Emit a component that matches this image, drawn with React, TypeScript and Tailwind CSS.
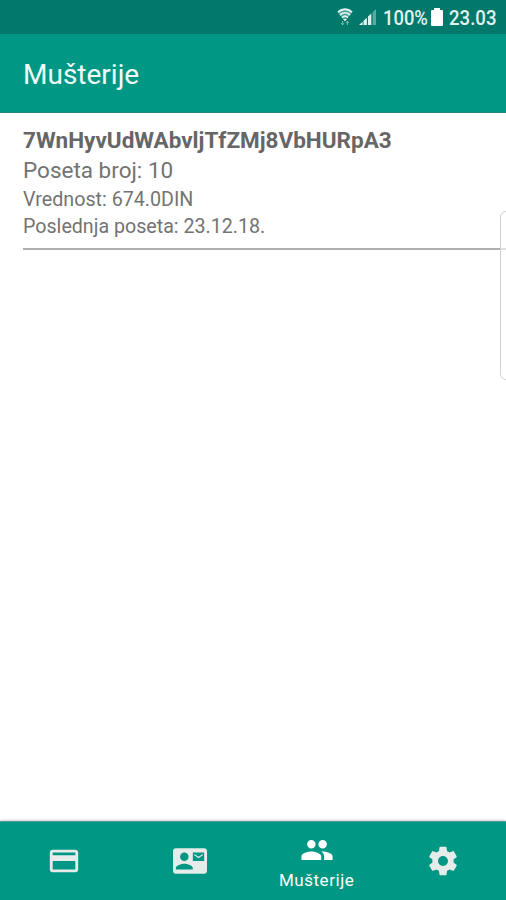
import type { ReactNode } from 'react';
import { MdContactMail, MdPayment, MdPeople } from 'react-icons/md';

interface Customer {
  id: string;
  visits: number;
  value: string;
  lastVisit: string;
}

interface Tab {
  key: string;
  label: string;
  icon: ReactNode;
}

const customers: Customer[] = [
  {
    id: '7WnHyvUdWAbvljTfZMj8VbHURpA3',
    visits: 10,
    value: '674.0DIN',
    lastVisit: '23.12.18.',
  },
];

function SettingsIcon() {
  return (
    <svg viewBox="0 0 24 24" className="size-[34px]" fill="currentColor">
      <path d="M19.43 12.98c.04-.32.07-.64.07-.98s-.03-.66-.07-.98l2.11-1.65c.19-.15.24-.42.12-.64l-2-3.46c-.12-.22-.39-.3-.61-.22l-2.49 1c-.52-.4-1.08-.73-1.69-.98l-.38-2.65C14.46 2.18 14.25 2 14 2h-4c-.25 0-.46.18-.49.42l-.38 2.65c-.61.25-1.17.59-1.69.98l-2.49-1c-.23-.09-.49 0-.61.22l-2 3.46c-.13.22-.07.49.12.64l2.11 1.65c-.04.32-.07.65-.07.98s.03.66.07.98l-2.11 1.65c-.19.15-.24.42-.12.64l2 3.46c.12.22.39.3.61.22l2.49-1c.52.4 1.08.73 1.69.98l.38 2.65c.03.24.24.42.49.42h4c.25 0 .46-.18.49-.42l.38-2.65c.61-.25 1.17-.59 1.69-.98l2.49 1c.23.09.49 0 .61-.22l2-3.46c.12-.22.07-.49-.12-.64l-2.11-1.65zM12 15.5c-1.93 0-3.5-1.57-3.5-3.5s1.57-3.5 3.5-3.5 3.5 1.57 3.5 3.5-1.57 3.5-3.5 3.5z" />
    </svg>
  );
}

const tabs: Tab[] = [
  { key: 'payment', label: 'Plaćanje', icon: <MdPayment className="size-[34px]" /> },
  { key: 'contact', label: 'Kontakt', icon: <MdContactMail className="size-[34px]" /> },
  { key: 'customers', label: 'Mušterije', icon: <MdPeople className="size-[34px]" /> },
  { key: 'settings', label: 'Podešavanja', icon: <SettingsIcon /> },
];

function WifiIcon() {
  return (
    <svg viewBox="0 0 16 18" className="h-[18px] w-4" fill="none" stroke="currentColor">
      <path d="M.8 4.6C4.6-.2 11.4-.2 15.2 4.6L8 13z" fill="currentColor" stroke="none" opacity=".35" />
      <path d="M1 4.2C5 .4 11 .4 15 4.2" strokeWidth="2" />
      <path d="M3 7c3-2.9 7-2.9 10 0" strokeWidth="1.8" />
      <path d="M5 9.6c1.8-1.7 4.2-1.7 6 0" strokeWidth="1.7" />
      <path d="M6 11h4l-2 2.2z" fill="currentColor" stroke="none" />
      <path d="M5.6 13v3.6M4.2 15.2l1.4 1.6L7 15.2M10.4 17v-3.6M9 15l1.4-1.6 1.4 1.6" strokeWidth=".9" opacity=".6" />
    </svg>
  );
}

function SignalIcon() {
  return (
    <svg viewBox="0 0 18 18" className="size-[18px]" fill="currentColor">
      <path d="M0 17l3.6-3.2V17zM4.5 12.8l3.4-3V17H4.5zM9 8.6l3.3-3V17H9z" />
      <path d="M13.6 4.2L17 1v16h-3.4z" opacity=".4" />
    </svg>
  );
}

function StatusBar() {
  return (
    <div className="flex h-[34px] shrink-0 items-center bg-[#00796b] pl-[337px] text-[20px] leading-none font-medium text-[#e2f2f0]">
      <WifiIcon />
      <span className="ml-[6px]">
        <SignalIcon />
      </span>
      <span className="ml-[6px] mt-px w-[46px] origin-left scale-x-[0.92] whitespace-nowrap">100%</span>
      <svg viewBox="0 0 12 18" className="ml-[2px] h-[18px] w-3" fill="#fff">
        <path d="M3 0h6v2h2a1 1 0 0 1 1 1v14a1 1 0 0 1-1 1H1a1 1 0 0 1-1-1V3a1 1 0 0 1 1-1h2z" />
      </svg>
      <span className="ml-[6px] mt-px origin-left scale-x-[0.93] whitespace-nowrap">23.03</span>
    </div>
  );
}

function CustomerRow({ customer }: { customer: Customer }) {
  return (
    <li className="ml-[23px] h-[137px] border-b-2 border-[#b0b0b0] pt-[12px] text-[#737373]">
      <div className="text-[22.5px] leading-[30px] font-bold text-[#666]">{customer.id}</div>
      <div className="text-[22.5px] leading-[30px]">Poseta broj: {customer.visits}</div>
      <div className="pt-px text-[19.7px] leading-[27px]">Vrednost: {customer.value}</div>
      <div className="text-[19.65px] leading-[27px]">Poslednja poseta: {customer.lastVisit}</div>
    </li>
  );
}

function BottomNav({ active }: { active: string }) {
  return (
    <nav className="grid h-[79px] shrink-0 grid-cols-4 border-t border-[#4d9f95] bg-[#009785] pl-px shadow-[0_-1px_2px_rgba(0,0,0,0.2)]">
      {tabs.map((tab) =>
        tab.key === active ? (
          <button key={tab.key} className="flex flex-col items-center pt-[11px] text-white">
            {tab.icon}
            <span className="mt-[3px] text-[17px] leading-5 tracking-[0.55px]">{tab.label}</span>
          </button>
        ) : (
          <button key={tab.key} aria-label={tab.label} className="flex items-center justify-center text-[#e6ecea]">
            {tab.icon}
          </button>
        ),
      )}
    </nav>
  );
}

export default function App() {
  return (
    <div className="relative flex h-[900px] w-[506px] flex-col overflow-hidden bg-white font-['Roboto',sans-serif]">
      <StatusBar />
      <header className="flex h-[79px] shrink-0 items-center border-b border-[#1f8579] bg-[#009785] pt-1 pl-[23px]">
        <h1 className="text-[28px] leading-8 text-[#f0fbf9]">Mušterije</h1>
      </header>
      <ul className="flex-1">
        {customers.map((customer) => (
          <CustomerRow key={customer.id} customer={customer} />
        ))}
      </ul>
      <BottomNav active="customers" />
      {/* edge panel handle */}
      <div className="absolute top-[211px] -right-[10px] h-[169px] w-4 rounded-[6px] border border-[#d0d0d0] bg-white/60" />
    </div>
  );
}
